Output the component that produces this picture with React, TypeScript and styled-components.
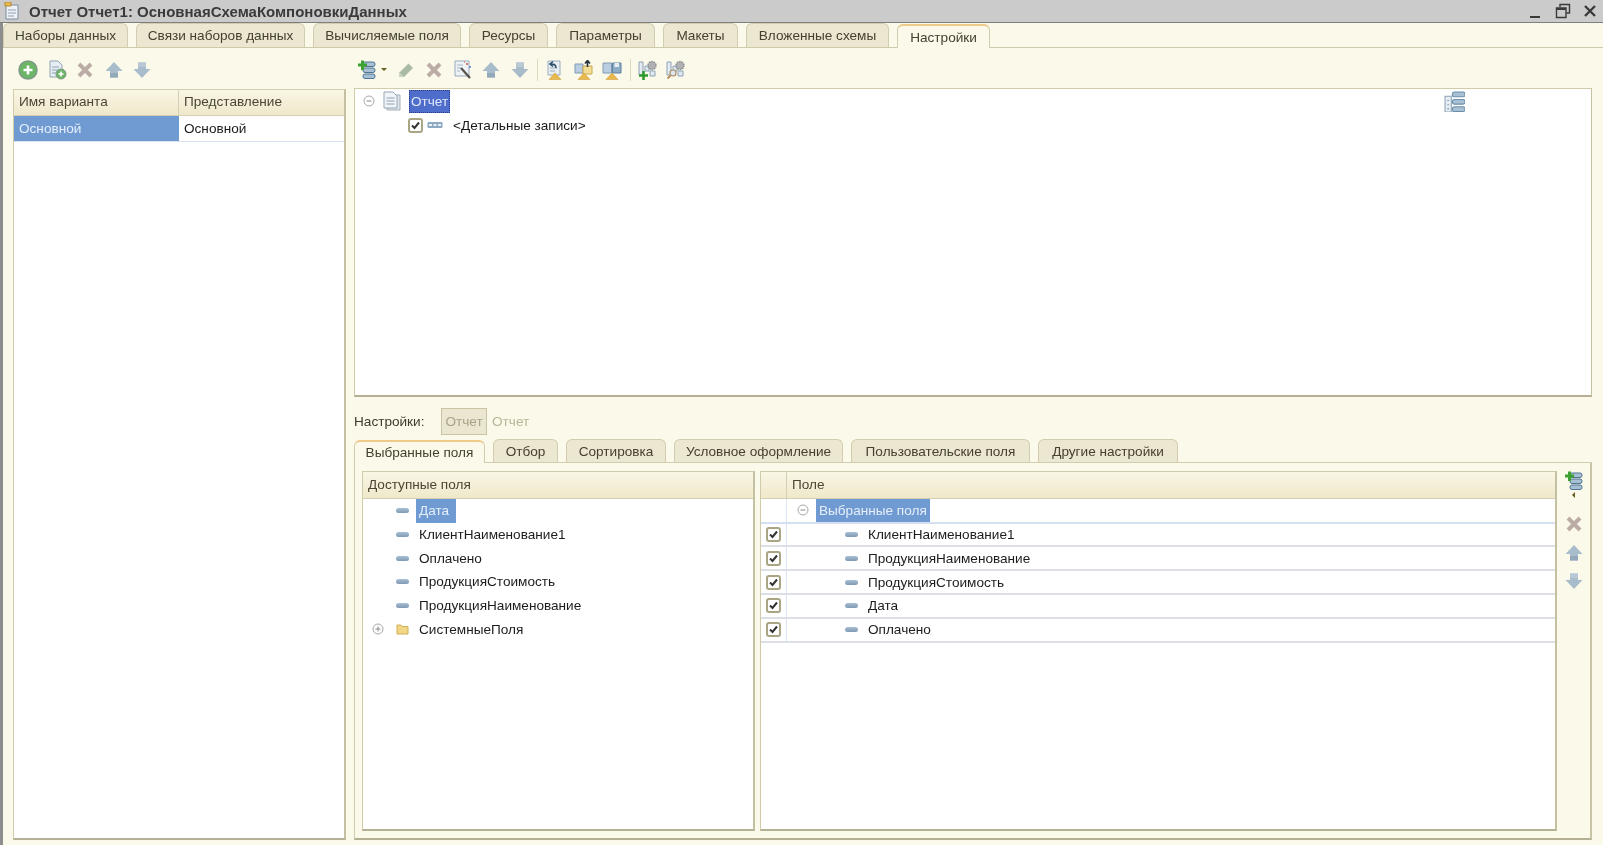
import { ReactNode } from "react";
import styled, { createGlobalStyle } from "styled-components";

const GlobalStyle = createGlobalStyle`
  html, body {
    margin: 0;
    padding: 0;
    background: #fbf9ea;
    overflow: hidden;
  }
`;

const Window = styled.div`
  width: 1603px;
  height: 845px;
  box-sizing: border-box;
  display: flex;
  flex-direction: column;
  background: #fbf9ea;
  border-left: 3px solid #8d8d8d;
  font-family: "Liberation Sans", Arial, sans-serif;
  font-size: 13.6px;
  color: #222;
  filter: blur(0.5px);
`;

const TitleBar = styled.div`
  height: 22px;
  margin-left: -3px;
  flex: none;
  display: flex;
  align-items: center;
  background: #cbcbcb;
  border-bottom: 1px solid #7f7f7f;
  padding: 0 4px;
`;

const Title = styled.div`
  margin-left: 7px;
  font-size: 15px;
  font-weight: 700;
  color: #3a3a3a;
  flex: 1;
  white-space: nowrap;
`;

const WindowControls = styled.div`
  display: flex;
  align-items: center;
  gap: 11px;
  padding-right: 1px;
`;

const TabStrip = styled.div<{ $gap: number; $bottom: string }>`
  flex: none;
  display: flex;
  align-items: flex-end;
  gap: ${(p) => p.$gap}px;
  border-bottom: 1px solid ${(p) => p.$bottom};
`;

const Tab = styled.div<{ $width: number; $active?: boolean; $height: number }>`
  width: ${(p) => p.$width}px;
  height: ${(p) => p.$height}px;
  box-sizing: border-box;
  display: flex;
  align-items: center;
  justify-content: center;
  border: 1px solid #d2cdb0;
  border-bottom: none;
  border-radius: 6px 6px 0 0;
  background: ${(p) => (p.$active ? "#fbf9ea" : "#ece7d0")};
  border-top-color: ${(p) => (p.$active ? "#eec98a" : "#d2cdb0")};
  border-top-width: ${(p) => (p.$active ? 2 : 1)}px;
  margin-bottom: ${(p) => (p.$active ? -1 : 0)}px;
  position: relative;
  color: #45412e;
  white-space: nowrap;
`;

const Main = styled.div`
  flex: 1;
  min-height: 0;
  display: flex;
  gap: 8px;
  padding: 0 3px 5px 10px;
`;

const LeftPane = styled.div`
  width: 333px;
  flex: none;
  display: flex;
  flex-direction: column;
`;

const RightPane = styled.div`
  flex: 1;
  min-width: 0;
  display: flex;
  flex-direction: column;
  padding-right: 8px;
`;

const Toolbar = styled.div<{ $height: number; $shift?: number; $drop: number }>`
  height: ${(p) => p.$height}px;
  box-sizing: border-box;
  padding-top: ${(p) => p.$drop}px;
  flex: none;
  display: flex;
  align-items: center;
  margin-left: ${(p) => p.$shift ?? 0}px;
`;

const ToolButton = styled.div`
  width: 28.5px;
  height: 24px;
  flex: none;
  display: flex;
  align-items: center;
  justify-content: center;
`;

const ToolCaret = styled.div`
  width: 10px;
  margin-left: -3px;
  margin-right: 3px;
  display: flex;
  justify-content: center;
  &::before {
    content: "";
    border: 3px solid transparent;
    border-top: 3px solid #6b5a20;
    border-bottom: 0;
  }
`;

const ToolSeparator = styled.div`
  width: 1px;
  height: 22px;
  margin: 0 3px;
  flex: none;
  background: #ddd9bf;
`;

const Frame = styled.div`
  box-sizing: border-box;
  background: #fff;
  border: 1px solid #cfcbab;
  border-bottom: 2px solid #b4b093;
  border-right: 2px solid #c4c0a2;
`;

const VariantsTable = styled(Frame)`
  flex: 1;
  min-height: 0;
`;

const GridHeader = styled.div<{ $columns: string; $height: number }>`
  height: ${(p) => p.$height}px;
  box-sizing: border-box;
  display: grid;
  grid-template-columns: ${(p) => p.$columns};
  background: linear-gradient(#f9f6e4, #efe8cb);
  border-bottom: 1px solid #d4cfb0;
  color: #4a4632;
`;

const HeaderCell = styled.div<{ $divider?: boolean }>`
  display: flex;
  align-items: center;
  padding: 0 0 2px 5px;
  border-right: ${(p) => (p.$divider ? "1px solid #d4cfb0" : "none")};
`;

const VariantRow = styled.div`
  height: 25px;
  display: grid;
  grid-template-columns: 165px 1fr;
  border-bottom: 1px solid #d8e2f0;
`;

const VariantCell = styled.div<{ $selected?: boolean }>`
  display: flex;
  align-items: center;
  padding: 0 0 1px 5px;
  background: ${(p) => (p.$selected ? "#6f9bd2" : "#fff")};
  color: ${(p) => (p.$selected ? "#e6eefa" : "#1a1a1a")};
`;

const TreeFrame = styled(Frame)`
  height: 309px;
  flex: none;
  border-right-width: 1px;
`;

const TreeRow = styled.div<{ $indent: number; $height: number }>`
  height: ${(p) => p.$height}px;
  display: flex;
  align-items: center;
  padding-left: ${(p) => p.$indent}px;
  color: #1a1a1a;
`;

const FocusedLabel = styled.div`
  height: 23px;
  width: 41px;
  box-sizing: border-box;
  margin-left: 7px;
  display: flex;
  align-items: center;
  justify-content: center;
  background: #4f6ecb;
  color: #dfe6fa;
  outline: 1px dotted #2a3c86;
  outline-offset: -1px;
`;

const StructureButton = styled.div`
  margin-left: auto;
  margin-right: 126px;
  display: flex;
`;

const RecordsGlyph = styled.div`
  margin: 0 10px 0 4px;
  display: flex;
`;

const SettingsRow = styled.div`
  height: 42px;
  flex: none;
  display: flex;
  align-items: center;
  padding-top: 6px;
  box-sizing: border-box;
`;

const SettingsLabel = styled.div`
  width: 87px;
  color: #3d3a2a;
`;

const ModeButton = styled.div`
  width: 46px;
  height: 27px;
  box-sizing: border-box;
  display: flex;
  align-items: center;
  justify-content: center;
  background: #ebe6cf;
  border: 1px solid #c9c4a4;
  color: #a8a487;
`;

const ModeValue = styled.div`
  margin-left: 5px;
  color: #b9b597;
`;

const FieldsPanel = styled.div`
  flex: 1;
  min-height: 0;
  display: flex;
  box-sizing: border-box;
  padding: 8px 0 7px 7px;
  border: 1px solid #d2cdb0;
  border-top: 0;
  border-bottom: 2px solid #b4b093;
  border-right: 2px solid #c8c4a6;
`;

const AvailableList = styled(Frame)`
  width: 393px;
  flex: none;
  margin-right: 5px;
`;

const SelectedList = styled(Frame)`
  flex: 1;
  min-width: 0;
`;

const SideToolbar = styled.div`
  width: 33px;
  flex: none;
  display: flex;
  flex-direction: column;
  align-items: center;
`;

const SideCaret = styled.div`
  height: 8px;
  margin-bottom: 11px;
  display: flex;
  align-items: center;
  &::before {
    content: "";
    border: 3px solid transparent;
    border-right: 3px solid #6b5a20;
    border-left: 0;
  }
`;

const SideButton = styled.div`
  height: 28.5px;
  display: flex;
  align-items: center;
  justify-content: center;
`;

const FieldRow = styled.div<{ $indent: number }>`
  height: 23.7px;
  display: flex;
  align-items: center;
  padding-left: ${(p) => p.$indent}px;
  color: #1c1c1c;
`;

const FieldGlyph = styled.div`
  width: 13px;
  height: 5px;
  margin-right: 10px;
  flex: none;
  border-radius: 3px;
  background: linear-gradient(#a9bfd3, #7f9ab4);
`;

const FolderGlyph = styled.div`
  margin-right: 10px;
  flex: none;
  display: flex;
`;

const HighlightLabel = styled.div<{ $width: number }>`
  width: ${(p) => p.$width}px;
  height: 100%;
  box-sizing: border-box;
  display: flex;
  align-items: center;
  padding-left: 3px;
  margin-left: -3px;
  background: #6f9bd2;
  color: #e6eefa;
`;

const ToggleSlot = styled.div<{ $width: number }>`
  width: ${(p) => p.$width}px;
  display: flex;
  flex: none;
`;

const CheckedRow = styled.div<{ $head?: boolean }>`
  height: ${(p) => (p.$head ? 24.7 : 23.8)}px;
  box-sizing: border-box;
  display: grid;
  grid-template-columns: 26px 1fr;
  border-bottom: 2px solid ${(p) => (p.$head ? "#d5e1f2" : "#dcdfe6")};
`;

const CheckCell = styled.div`
  display: flex;
  align-items: center;
  justify-content: center;
  border-right: 1px solid #dbe5f3;
`;

const NameCell = styled.div<{ $indent: number }>`
  display: flex;
  align-items: center;
  padding-left: ${(p) => p.$indent}px;
  color: #1c1c1c;
`;

const CheckFrame = styled.div`
  width: 15px;
  height: 15px;
  box-sizing: border-box;
  border: 2px solid #aaa585;
  border-radius: 3px;
  background: #fff;
  display: flex;
  align-items: center;
  justify-content: center;
  flex: none;
`;

function Checkbox() {
  return (
    <CheckFrame>
      <svg width="11" height="11" viewBox="0 0 11 11">
        <path d="M2 5.5 L4.5 8 L9 2.5" fill="none" stroke="#333" strokeWidth="2" />
      </svg>
    </CheckFrame>
  );
}

function Toggle({ open }: { open: boolean }) {
  return (
    <svg width="12" height="12" viewBox="0 0 12 12">
      <circle cx="6" cy="6" r="5" fill="#fff" stroke="#a8a8a8" />
      <path d={open ? "M3.5 6H8.5" : "M3.5 6H8.5M6 3.5V8.5"} stroke="#888" />
    </svg>
  );
}

function Sheet({ children, size = 20 }: { children: ReactNode; size?: number }) {
  return (
    <svg width={size} height={size} viewBox="0 0 20 20">
      {children}
    </svg>
  );
}

const AddCircleIcon = () => (
  <Sheet>
    <circle cx="10" cy="10" r="9" fill="#6db668" stroke="#7d9a84" strokeWidth="1.5" />
    <path d="M10 5.5V14.5M5.5 10H14.5" stroke="#fff" strokeWidth="2.6" />
  </Sheet>
);

const AddDocIcon = () => (
  <Sheet>
    <path d="M3 1H11L15 5V17H3Z" fill="#e6edf3" stroke="#90a4b6" />
    <path d="M5 7H12M5 10H11M5 13H9" stroke="#8ea2b5" />
    <circle cx="14" cy="14" r="5" fill="#6db668" stroke="#7d9a84" />
    <path d="M14 11.5V16.5M11.5 14H16.5" stroke="#fff" strokeWidth="1.6" />
  </Sheet>
);

const CrossIcon = () => (
  <Sheet>
    <path d="M4 4L16 16M16 4L4 16" stroke="#bcaca6" strokeWidth="4" />
  </Sheet>
);

const UpIcon = () => (
  <Sheet>
    <path d="M10 2L18.5 11H14V17.5H6V11H1.5Z" fill="#a8bccb" />
    <path d="M6 13H14V17.5H6Z" fill="#93a9ba" />
  </Sheet>
);

const DownIcon = () => (
  <Sheet>
    <path d="M10 18L18.5 9H14V2.5H6V9H1.5Z" fill="#a8bccb" />
    <path d="M6 2.5H14V7H6Z" fill="#b8c8d4" />
  </Sheet>
);

const AddListIcon = () => (
  <Sheet>
    <rect x="6" y="2" width="12" height="4.5" rx="2" fill="#a8c0d4" stroke="#4f7593" />
    <rect x="6" y="8" width="12" height="4.5" rx="2" fill="#a8c0d4" stroke="#4f7593" />
    <rect x="6" y="14" width="12" height="4.5" rx="2" fill="#a8c0d4" stroke="#4f7593" />
    <path d="M5.5 0.5V10M1 5H10" stroke="#3da132" strokeWidth="3" />
  </Sheet>
);

const PencilIcon = () => (
  <Sheet>
    <path d="M12.5 3.5L17 8L8 17H3.5V12.5Z" fill="#a9baa5" />
    <path d="M3.5 17V12.5L8 17Z" fill="#c9d2c5" />
  </Sheet>
);

const WizardIcon = () => (
  <Sheet>
    <path d="M2 1H16V16H2Z" fill="#eef2f6" stroke="#96a9bb" />
    <path d="M4 5H10M4 8H8M4 11H7" stroke="#a8b8c6" />
    <path d="M8 8L17 18" stroke="#56524a" strokeWidth="2.2" />
    <path d="M13 4H15M14 3V5" stroke="#d0503c" />
    <path d="M16 7H18M17 6V8" stroke="#4f7fd0" />
    <path d="M11 2H12" stroke="#d0503c" />
  </Sheet>
);

const GoldBase = () => <path d="M4 19.5L10 13L16 19.5Z" fill="#e9b94e" stroke="#c9962e" strokeWidth="0.5" />;

const LoadDocIcon = () => (
  <Sheet>
    <path d="M3 1H15V15H3Z" fill="#e9eef3" stroke="#9aacbc" />
    <path d="M5 8H12M5 11H10" stroke="#9aacbc" />
    <path d="M11 8C11 4 8 4 6 4M8 1.5L5 4L8 6.5" fill="none" stroke="#2f4f6b" strokeWidth="1.6" />
    <GoldBase />
  </Sheet>
);

const OpenBookIcon = () => (
  <Sheet>
    <path d="M1 4H9V13H1Z" fill="#b9cee0" stroke="#7f9ab2" />
    <path d="M9 6H18V14H9Z" fill="#f3dc94" stroke="#caa850" />
    <path d="M13.5 1V7M11 3.5L13.5 0.5L16 3.5" fill="none" stroke="#23303c" strokeWidth="1.6" />
    <GoldBase />
  </Sheet>
);

const SaveBookIcon = () => (
  <Sheet>
    <path d="M1 3H9.5V13H1Z" fill="#b9cee0" stroke="#7f9ab2" />
    <path d="M10.5 3H19V13H10.5Z" fill="#8eaec8" stroke="#5f83a0" />
    <path d="M12.5 3H17V7H12.5Z" fill="#e6eef4" />
    <GoldBase />
  </Sheet>
);

const SchemaBase = () => (
  <>
    <path d="M1 2H5V15H1Z" fill="#e4ebf2" stroke="#8ea3b6" />
    <path d="M7 6H11V11H7ZM12 11H17V16H12Z" fill="#dfe8f0" stroke="#8ea3b6" />
    <circle cx="14" cy="5.5" r="4" fill="#aeb0b2" stroke="#8a8d90" strokeWidth="1.4" strokeDasharray="1.5 1" />
  </>
);

const SchemaAddIcon = () => (
  <Sheet>
    <SchemaBase />
    <path d="M5.5 11V20M1 15.5H10" stroke="#2f9a2b" strokeWidth="2.6" />
  </Sheet>
);

const SchemaFindIcon = () => (
  <Sheet>
    <SchemaBase />
    <circle cx="7" cy="13" r="3" fill="#d9e8f4" stroke="#b08c62" strokeWidth="1.2" />
    <path d="M4.5 15.5L1.5 18.5" stroke="#b08c62" strokeWidth="1.8" />
  </Sheet>
);

const StructureIcon = () => (
  <Sheet size={21}>
    <path d="M1 5H7V20H1Z" fill="#e6edf3" stroke="#8ea3b6" />
    <path d="M3 9H5M3 13H5M3 17H5" stroke="#8ea3b6" />
    <rect x="8" y="1" width="12" height="4.5" rx="2" fill="#a8c0d4" stroke="#6b8eaa" />
    <rect x="8" y="8" width="12" height="4.5" rx="2" fill="#a8c0d4" stroke="#6b8eaa" />
    <rect x="8" y="15" width="12" height="4.5" rx="2" fill="#a8c0d4" stroke="#6b8eaa" />
  </Sheet>
);

const ReportDocIcon = () => (
  <Sheet>
    <path d="M5 4H18V19H5Z" fill="#dfe4ea" stroke="#a2afbc" />
    <path d="M2 1H11L15 5V17H2Z" fill="#f2f5f8" stroke="#97a6b5" />
    <path d="M4.5 7H12.5M4.5 10H12.5M4.5 13H12.5" stroke="#8ea0b2" />
  </Sheet>
);

const RecordsIcon = () => (
  <svg width="16" height="9" viewBox="0 0 16 9">
    <rect x="0.5" y="1" width="15" height="6" rx="1" fill="#8ea9c2" />
    <path d="M2 3H5V5H2ZM6.5 3H9.5V5H6.5ZM11 3H14V5H11Z" fill="#e9f0f6" />
  </svg>
);

const FolderIcon = () => (
  <svg width="13" height="12" viewBox="0 0 13 12">
    <path d="M1 2H5L6 3.5H12V11H1Z" fill="#f1d684" stroke="#cfae5a" />
  </svg>
);

const WindowLogo = () => (
  <svg width="18" height="18" viewBox="0 0 18 18">
    <path d="M2 3H14V17H2Z" fill="#eef2f6" stroke="#7d8ea0" />
    <path d="M4 8H12M4 11H12M4 14H10" stroke="#8ea0b2" />
    <path d="M1 0H7V4H1Z" fill="#e9b94e" stroke="#b58a2c" />
  </svg>
);

const MinimizeGlyph = () => (
  <svg width="16" height="16" viewBox="0 0 16 16">
    <path d="M2 14H12" stroke="#3a3a3a" strokeWidth="2" />
  </svg>
);

const RestoreGlyph = () => (
  <svg width="16" height="16" viewBox="0 0 16 16">
    <path d="M5 4V1.5H14.5V10H11.5" fill="none" stroke="#3a3a3a" strokeWidth="1.4" />
    <path d="M1.5 5H11V14.5H1.5Z" fill="none" stroke="#3a3a3a" strokeWidth="1.4" />
    <path d="M1.5 6H11" stroke="#3a3a3a" strokeWidth="2" />
  </svg>
);

const CloseGlyph = () => (
  <svg width="16" height="16" viewBox="0 0 16 16">
    <path d="M3 3L13 13M13 3L3 13" stroke="#3a3a3a" strokeWidth="2.4" />
  </svg>
);

const topTabs = [
  { label: "Наборы данных", width: 125 },
  { label: "Связи наборов данных", width: 169 },
  { label: "Вычисляемые поля", width: 148 },
  { label: "Ресурсы", width: 79 },
  { label: "Параметры", width: 99 },
  { label: "Макеты", width: 75 },
  { label: "Вложенные схемы", width: 143 },
  { label: "Настройки", width: 93, active: true },
];

const fieldTabs = [
  { label: "Выбранные поля", width: 131, active: true },
  { label: "Отбор", width: 65 },
  { label: "Сортировка", width: 100 },
  { label: "Условное оформление", width: 169 },
  { label: "Пользовательские поля", width: 179 },
  { label: "Другие настройки", width: 140 },
];

const availableFields = [
  "КлиентНаименование1",
  "Оплачено",
  "ПродукцияСтоимость",
  "ПродукцияНаименование",
];

const selectedFields = [
  "КлиентНаименование1",
  "ПродукцияНаименование",
  "ПродукцияСтоимость",
  "Дата",
  "Оплачено",
];

export default function App() {
  return (
    <>
      <GlobalStyle />
      <Window>
        <TitleBar>
          <WindowLogo />
          <Title>Отчет Отчет1: ОсновнаяСхемаКомпоновкиДанных</Title>
          <WindowControls>
            <MinimizeGlyph />
            <RestoreGlyph />
            <CloseGlyph />
          </WindowControls>
        </TitleBar>

        <TabStrip $gap={8} $bottom="#cfcaa9">
          {topTabs.map((tab) => (
            <Tab key={tab.label} $width={tab.width} $height={24} $active={tab.active}>
              {tab.label}
            </Tab>
          ))}
        </TabStrip>

        <Main>
          <LeftPane>
            <Toolbar $height={41} $shift={1} $drop={2}>
              <ToolButton><AddCircleIcon /></ToolButton>
              <ToolButton><AddDocIcon /></ToolButton>
              <ToolButton><CrossIcon /></ToolButton>
              <ToolButton><UpIcon /></ToolButton>
              <ToolButton><DownIcon /></ToolButton>
            </Toolbar>
            <VariantsTable>
              <GridHeader $columns="165px 1fr" $height={26}>
                <HeaderCell $divider>Имя варианта</HeaderCell>
                <HeaderCell>Представление</HeaderCell>
              </GridHeader>
              <VariantRow>
                <VariantCell $selected>Основной</VariantCell>
                <VariantCell>Основной</VariantCell>
              </VariantRow>
            </VariantsTable>
          </LeftPane>

          <RightPane>
            <Toolbar $height={40} $shift={-1} $drop={3}>
              <ToolButton><AddListIcon /></ToolButton>
              <ToolCaret />
              <ToolButton><PencilIcon /></ToolButton>
              <ToolButton><CrossIcon /></ToolButton>
              <ToolButton><WizardIcon /></ToolButton>
              <ToolButton><UpIcon /></ToolButton>
              <ToolButton><DownIcon /></ToolButton>
              <ToolSeparator />
              <ToolButton><LoadDocIcon /></ToolButton>
              <ToolButton><OpenBookIcon /></ToolButton>
              <ToolButton><SaveBookIcon /></ToolButton>
              <ToolSeparator />
              <ToolButton><SchemaAddIcon /></ToolButton>
              <ToolButton><SchemaFindIcon /></ToolButton>
            </Toolbar>

            <TreeFrame>
              <TreeRow $indent={8} $height={24}>
                <ToggleSlot $width={19}><Toggle open /></ToggleSlot>
                <ReportDocIcon />
                <FocusedLabel>Отчет</FocusedLabel>
                <StructureButton><StructureIcon /></StructureButton>
              </TreeRow>
              <TreeRow $indent={53} $height={24}>
                <Checkbox />
                <RecordsGlyph><RecordsIcon /></RecordsGlyph>
                &lt;Детальные записи&gt;
              </TreeRow>
            </TreeFrame>

            <SettingsRow>
              <SettingsLabel>Настройки:</SettingsLabel>
              <ModeButton>Отчет</ModeButton>
              <ModeValue>Отчет</ModeValue>
            </SettingsRow>

            <TabStrip $gap={8} $bottom="#d2cdb0">
              {fieldTabs.map((tab) => (
                <Tab key={tab.label} $width={tab.width} $height={23} $active={tab.active}>
                  {tab.label}
                </Tab>
              ))}
            </TabStrip>

            <FieldsPanel>
              <AvailableList>
                <GridHeader $columns="1fr" $height={27}>
                  <HeaderCell>Доступные поля</HeaderCell>
                </GridHeader>
                <FieldRow $indent={33}>
                  <FieldGlyph />
                  <HighlightLabel $width={40}>Дата</HighlightLabel>
                </FieldRow>
                {availableFields.map((name) => (
                  <FieldRow key={name} $indent={33}>
                    <FieldGlyph />
                    {name}
                  </FieldRow>
                ))}
                <FieldRow $indent={9}>
                  <ToggleSlot $width={24}><Toggle open={false} /></ToggleSlot>
                  <FolderGlyph><FolderIcon /></FolderGlyph>
                  СистемныеПоля
                </FieldRow>
              </AvailableList>

              <SelectedList>
                <GridHeader $columns="26px 1fr" $height={27}>
                  <HeaderCell $divider />
                  <HeaderCell>Поле</HeaderCell>
                </GridHeader>
                <CheckedRow $head>
                  <CheckCell />
                  <NameCell $indent={10}>
                    <ToggleSlot $width={22}><Toggle open /></ToggleSlot>
                    <HighlightLabel $width={114}>Выбранные поля</HighlightLabel>
                  </NameCell>
                </CheckedRow>
                {selectedFields.map((name) => (
                  <CheckedRow key={name}>
                    <CheckCell><Checkbox /></CheckCell>
                    <NameCell $indent={58}>
                      <FieldGlyph />
                      {name}
                    </NameCell>
                  </CheckedRow>
                ))}
              </SelectedList>

              <SideToolbar>
                <AddListIcon />
                <SideCaret />
                <SideButton><CrossIcon /></SideButton>
                <SideButton><UpIcon /></SideButton>
                <SideButton><DownIcon /></SideButton>
              </SideToolbar>
            </FieldsPanel>
          </RightPane>
        </Main>
      </Window>
    </>
  );
}
